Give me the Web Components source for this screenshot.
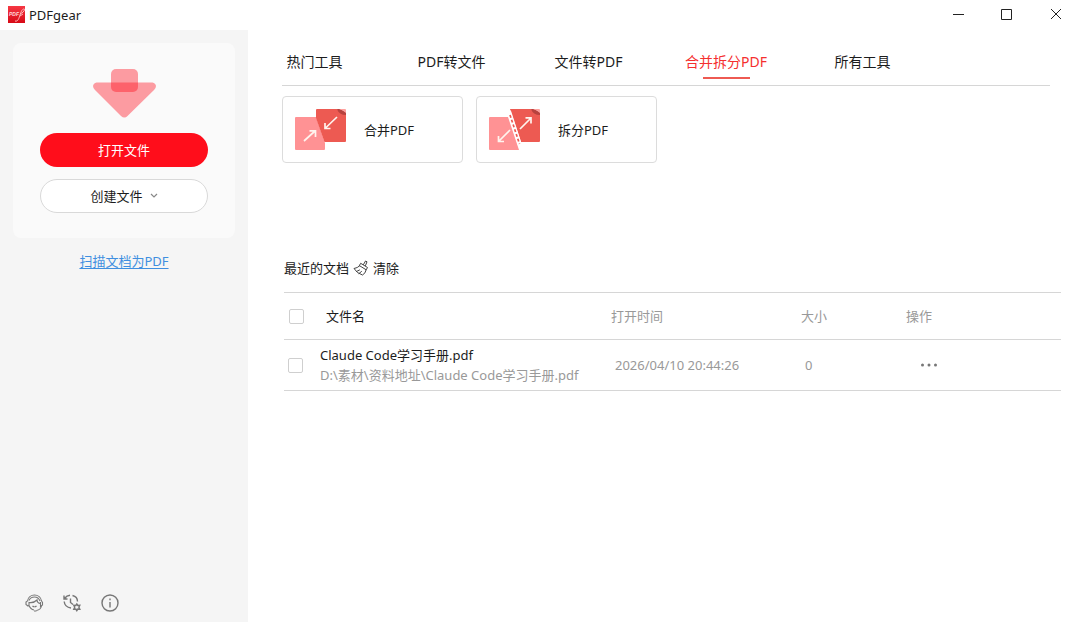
<!DOCTYPE html>
<html lang="zh-CN">
<head>
<meta charset="utf-8">
<title>PDFgear</title>
<style>
  body { margin: 0; background: #fff; color: #1c1c1c; font: 13px/20px "Noto Sans", "Noto Sans CJK SC", sans-serif; }
</style>
</head>
<body>
<pdf-app></pdf-app>

<template id="pdf-app">
  <style>
    :host { display: flex; flex-direction: column; min-height: 100vh; }
    .body { display: flex; flex: 1; }
    main { flex: 1; min-width: 0; }
    .cards { display: flex; flex-wrap: wrap; align-content: flex-start; gap: 13px; min-height: 172px; padding: 10px 30px 0 34px; box-sizing: border-box; }
  </style>
  <title-bar>PDFgear</title-bar>
  <div class="body">
    <side-bar></side-bar>
    <main>
      <tool-tabs></tool-tabs>
      <div class="cards">
        <tool-card>
          <svg slot="icon" width="52" height="42" viewBox="0 0 52 42">
            <path d="M1 8h20l9 26v6q0 1-1 1H1q-1 0-1-1V9q0-1 1-1z" fill="#ff9294"/>
            <path d="M21 1q0-1 1-1h20l9 5v27q0 1-1 1H29.500L21 9z" fill="#ed5a52"/>
            <path d="M42 0h3l6 3v3q-7 0-9-6z" fill="#b8423e"/><path d="M44 0h6q1 0 1 1v3q-3-3-7-4z" fill="#ffa09d"/>
            <g fill="none" stroke="#fff4ee" stroke-width="1.700"><path d="M9 32 20 22M14.500 21.800H20.500V28M42 8 30 19.500M30 14v5.500h5.500"/></g>
          </svg>合并PDF
        </tool-card>
        <tool-card>
          <svg slot="icon" width="52" height="42" viewBox="0 0 52 42">
            <path d="M1 8h18l11 33H1q-1 0-1-1V9q0-1 1-1z" fill="#ff9294"/>
            <path d="M21 0h21l9 5v27q0 1-1 1H32z" fill="#ed5a52"/>
            <path d="M42 0h3l6 3v3q-7 0-9-6z" fill="#b8423e"/><path d="M44 0h6q1 0 1 1v3q-3-3-7-4z" fill="#ffa09d"/>
            <path d="m20 2 11 34" fill="none" stroke="#fff" stroke-width="4"/>
            <path d="m21 6 9.500 29" fill="none" stroke="#ed5a52" stroke-width="1.700" stroke-dasharray="3 2"/>
            <g fill="none" stroke="#fff4ee" stroke-width="1.700"><path d="M31 20 42 9M36.500 8.800H42v5.700M21 21 9.500 32.500M9.500 27v5.500H15"/></g>
          </svg>拆分PDF
        </tool-card>
      </div>
      <recent-files></recent-files>
    </main>
  </div>
</template>

<template id="title-bar">
  <style>
    :host { display: flex; height: 30px; align-items: center; padding-left: 7px; }
    .name { flex: 1; margin-left: 4px; }
    button { width: 49px; height: 28px; padding: 0; border: 0; background: none; display: grid; place-items: center; }
    svg { display: block; }
  </style>
  <svg width="18" height="18" viewBox="0 0 18 18">
    <defs><linearGradient id="g" x2="0" y2="1"><stop stop-color="#f63843"/><stop offset="1" stop-color="#d70916"/></linearGradient></defs>
    <path fill="url(#g)" d="M1 0h17v17H1z"/>
    <text x="2" y="10" font-size="5" font-style="italic" font-weight="700" font-family="Liberation Sans, sans-serif" fill="#ffd9da">PDF</text>
    <path d="M8 15c3 1 4-3 5-6s2-6 4-6-1 4-4 5M13 10l3-2" fill="none" stroke="#ffb9bb" stroke-width="1"/>
  </svg>
  <span class="name"><slot></slot></span>
  <button aria-label="最小化"><svg width="12" height="12"><path d="M1 5.500h11" stroke="#222"/></svg></button>
  <button aria-label="最大化"><svg width="12" height="12"><path d="M.500.500h10v10h-10z" fill="none" stroke="#222"/></svg></button>
  <button aria-label="关闭"><svg width="12" height="12"><path d="m1 0 10 10M11 0 1 10" stroke="#222"/></svg></button>
</template>

<template id="side-bar">
  <style>
    :host { display: flex; flex-direction: column; align-items: center; width: 248px; box-sizing: border-box; padding: 13px 13px 9px; background: #f5f5f5; }
    .panel { display: flex; flex-direction: column; align-items: center; align-self: stretch; box-sizing: border-box; padding: 26px 27px 25px; background: #fafafa; border-radius: 8px; }
    .art { display: block; margin-bottom: 14px; }
    button { font: inherit; display: flex; align-items: center; justify-content: center; gap: 7px; align-self: stretch; height: 34px; padding: 0; border-radius: 17px; }
    .open { background: #ff0d1b; color: #fff; border: 0; margin-bottom: 12px; }
    .create { background: #fff; color: inherit; border: 1px solid #d9d9d9; }
    a { color: #3f8fe0; margin-top: 13px; text-decoration: underline; text-underline-offset: 2px; }
    footer { display: flex; gap: 18px; margin: auto auto 0 11px; }
    footer button { width: 20px; height: 20px; border: 0; background: none; color: #777; }
    footer svg { flex: none; }
  </style>
  <section class="panel">
    <svg class="art" width="64" height="50" viewBox="0 0 64 50" fill="#ff0d1b">
      <rect x="19" width="27" height="23" rx="5" fill-opacity=".4"/>
      <path fill-opacity=".4" d="M4.500 13.500h56q3 .500 3.500 3.500 0 2-2 4L35.500 47q-3 3-6.500 0L3 21q-2-2-2-4 .500-3 3.500-3.500z"/>
    </svg>
    <button class="open">打开文件</button>
    <button class="create">创建文件 <svg width="8" height="6"><path d="m1 1 3 3 3-3" fill="none" stroke="#888" stroke-width="1.200"/></svg></button>
  </section>
  <a href="#scan">扫描文档为PDF</a>
  <footer>
    <button aria-label="客服"><svg width="20" height="20" viewBox="0 0 20 20" fill="none" stroke="currentColor" stroke-width="1.100"><path d="M3.500 8C4 4.500 7 2 10.500 2S17 4.500 17.500 8M5 7.500C6 5 8 4 10.500 4s4.500 1.500 5.500 4M3.500 8 2 9v2.500L4 13l1-.500V9.500c3 .500 6-.500 8-2.500 0 2 1 3 3 3.500M17.500 8l1 1.500V12l-2 1.500V9M5 12.500c1 2.500 2.500 4 5 4.500M17.500 13c-.500 2.500-2 4-5 4.500M10 18h2.500M8.500 13c1 1 3 1 4 0"/></svg></button>
    <button aria-label="更新历史"><svg width="20" height="20" viewBox="0 0 20 20" fill="none" stroke="currentColor" stroke-width="1.400"><path d="M2 2.500V6h3.500M2.500 5.500C4 3.500 5.500 2.500 8 2.300M10.500 2.500c3 .700 5 3 5 6M2.200 8.500c.300 3.500 3 6 6.800 6.500M8.500 5.500v4l2.500 2"/><path d="m14.800 11 1 1.500 2-.200-.900 2 .900 2-2-.200-1 1.600-1-1.600-2 .200.900-2-.900-2 2 .200z"/></svg></button>
    <button aria-label="关于"><svg width="20" height="20" viewBox="0 0 20 20" fill="none" stroke="currentColor" stroke-width="1.400"><circle cx="10" cy="10" r="8"/><path d="M10 9v5.500M10 5.500v1.700"/></svg></button>
  </footer>
</template>

<template id="tool-tabs">
  <style>
    :host { display: block; padding: 22px 30px 0 26px; }
    nav { display: flex; gap: 56px; height: 27px; }
    a { position: relative; width: 81px; flex: none; text-align: center; white-space: nowrap; font-size: 14px; color: inherit; text-decoration: none; }
    a[aria-current] { color: #f52f2f; }
    a[aria-current]::after { content: ""; position: absolute; left: 18px; right: 16px; bottom: 0; height: 2px; background: #ee5a52; }
    .line { margin: 6px 0 0 8px; border-bottom: 1px solid #d6d6d6; }
  </style>
  <nav>
    <a href="#hot">热门工具</a>
    <a href="#from-pdf">PDF转文件</a>
    <a href="#to-pdf">文件转PDF</a>
    <a href="#merge" aria-current="page">合并拆分PDF</a>
    <a href="#all">所有工具</a>
  </nav>
  <div class="line"></div>
</template>

<template id="tool-card">
  <style>
    :host { display: block; }
    button { display: flex; align-items: center; gap: 17px; width: 181px; height: 67px; padding: 0 12px; font: inherit; color: inherit; text-align: left; background: #fff; border: 1px solid #dcdcdc; border-radius: 4px; }
    ::slotted(svg) { display: block; }
  </style>
  <button><slot name="icon"></slot><span><slot></slot></span></button>
</template>

<template id="recent-files">
  <style>
    :host { display: block; padding: 0 19px 0 36px; }
    header { display: flex; align-items: center; gap: 4px; }
    h2 { margin: 0; font: inherit; }
    .clear { display: flex; align-items: center; gap: 4px; padding: 0; border: 0; background: none; font: inherit; color: inherit; }
    table { width: 100%; margin-top: 14px; border-collapse: separate; border-spacing: 0; table-layout: fixed; border-top: 1px solid #d6d6d6; }
    th, td { padding: 0; font-weight: 400; text-align: left; border-bottom: 1px solid #d6d6d6; color: #999; white-space: nowrap; }
    th { height: 46px; }
    td { height: 50px; }
    .check { width: 36px; }
    .time { width: 190px; }
    .size { width: 105px; }
    .act { width: 155px; }
    th.check { padding-left: 5px; }
    td.check { padding-left: 4px; }
    th.name { padding-left: 6px; color: inherit; }
    td.time, td.size { padding-left: 4px; }
    td.act { padding-left: 14px; }
    .check, .time, .size, .act { box-sizing: border-box; }
    .title { color: #1c1c1c; }
    input { appearance: none; display: block; width: 15px; height: 15px; margin: 0; background: #fff; border: 1px solid #cfcfcf; border-radius: 2px; box-sizing: border-box; }
    input:checked { background: #ee3b3b; }
    .more { display: block; padding: 0; border: 0; background: none; }
    svg { display: block; }
  </style>
  <header>
    <h2>最近的文档</h2>
    <button class="clear">
      <svg width="16" height="16" viewBox="0 0 16 16" fill="none" stroke="#444" stroke-linejoin="round" stroke-linecap="round"><path d="m10.500 4.500 2-3.500 1.500.800-1.500 3.700M8 3.500l6.500 4-1.300 2.300L6.700 5.800zM6.700 5.800Q4.500 8 1 8.500 4 13.500 9.500 15q3-1.500 3.700-5.200M3.500 11.500 6.500 10M6 13.500l2.500-2"/></svg>
      清除
    </button>
  </header>
  <table>
    <thead>
      <tr><th class="check"><input type="checkbox" aria-label="全选"></th><th class="name">文件名</th><th class="time">打开时间</th><th class="size">大小</th><th class="act">操作</th></tr>
    </thead>
    <tbody>
      <tr>
        <td class="check"><input type="checkbox" aria-label="选择 Claude Code学习手册.pdf"></td>
        <td class="name"><div class="title">Claude Code学习手册.pdf</div><div>D:\素材\资料地址\Claude Code学习手册.pdf</div></td>
        <td class="time">2026/04/10 20:44:26</td>
        <td class="size">0</td>
        <td class="act"><button class="more" aria-label="更多操作"><svg width="18" height="4" fill="#777"><circle cx="2.500" cy="2" r="1.500"/><circle cx="9" cy="2" r="1.500"/><circle cx="15.500" cy="2" r="1.500"/></svg></button></td>
      </tr>
    </tbody>
  </table>
</template>

<script>
  class TemplateElement extends HTMLElement {
    constructor() {
      super();
      const template = document.getElementById(this.localName);
      this.attachShadow({ mode: "open" }).append(template.content.cloneNode(true));
    }
  }
  customElements.define("title-bar", class TitleBar extends TemplateElement {});
  customElements.define("side-bar", class SideBar extends TemplateElement {});
  customElements.define("tool-tabs", class ToolTabs extends TemplateElement {});
  customElements.define("tool-card", class ToolCard extends TemplateElement {});
  customElements.define("recent-files", class RecentFiles extends TemplateElement {});
  customElements.define("pdf-app", class PdfApp extends TemplateElement {});
</script>
</body>
</html>
